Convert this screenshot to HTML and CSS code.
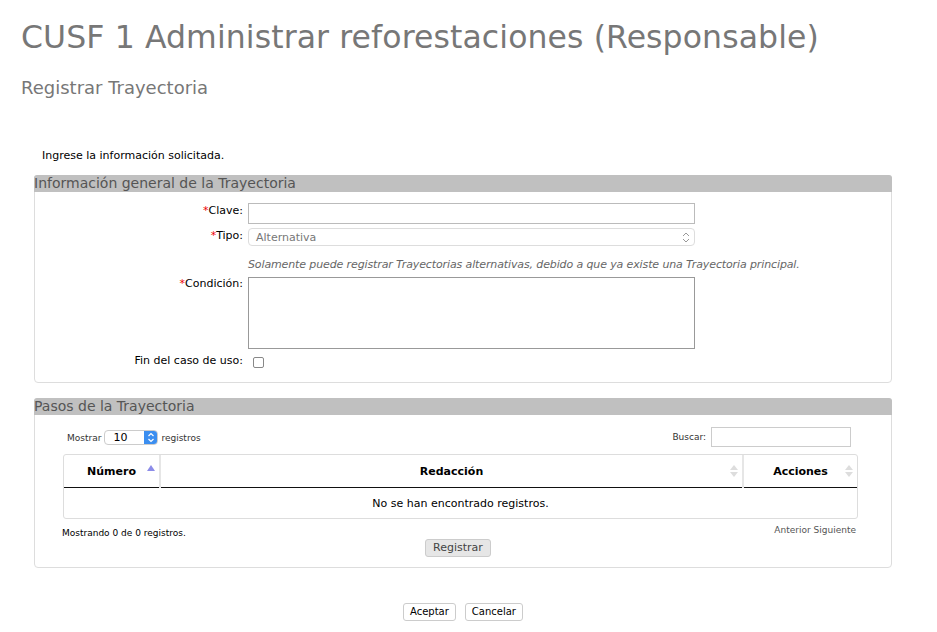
FILE: index.html
```html
<!DOCTYPE html>
<html lang="es">
<head>
<meta charset="utf-8">
<title>CUSF 1</title>
<link rel="stylesheet" href="styles.css">
</head>
<body>
<div class="page">
  <h1 class="title">CUSF 1 Administrar reforestaciones (Responsable)</h1>
  <h2 class="subtitle">Registrar Trayectoria</h2>
  <p class="intro">Ingrese la información solicitada.</p>

  <section class="panel panel-info">
    <div class="panel-head">Información general de la Trayectoria</div>
    <div class="form-grid">
      <label class="lbl lbl-clave"><span class="req">*</span>Clave:</label>
      <input class="inp" type="text">
      <label class="lbl lbl-tipo"><span class="req">*</span>Tipo:</label>
      <div class="select">
        <span>Alternativa</span>
        <svg class="updown" width="8" height="11" viewBox="0 0 8 11"><path d="M1 4 L4 1 L7 4 M1 7 L4 10 L7 7" fill="none" stroke="#999" stroke-width="1"/></svg>
      </div>
      <span></span>
      <p class="note">Solamente puede registrar Trayectorias alternativas, debido a que ya existe una Trayectoria principal.</p>
      <label class="lbl lbl-cond"><span class="req">*</span>Condición:</label>
      <div class="textarea"></div>
      <label class="lbl lbl-fin">Fin del caso de uso:</label>
      <div class="chk-wrap"><span class="chk"></span></div>
    </div>
  </section>

  <section class="panel panel-steps">
    <div class="panel-head">Pasos de la Trayectoria</div>
    <div class="dt-top">
      <div class="dt-length">Mostrar
        <span class="len-sel"><span class="len-val">10</span><span class="len-btn"><svg width="8" height="11" viewBox="0 0 8 11"><path d="M1.5 4 L4 1.5 L6.5 4 M1.5 7 L4 9.5 L6.5 7" fill="none" stroke="#fff" stroke-width="1.2"/></svg></span></span>
        registros</div>
      <div class="dt-filter">Buscar: <span class="search"></span></div>
    </div>
    <div class="table-wrap">
      <table class="dt">
        <thead>
          <tr>
            <th class="c-num">Número <span class="sort-up"></span></th>
            <th class="c-red">Redacción <span class="sort-both"><i class="u"></i><i class="d"></i></span></th>
            <th class="c-acc">Acciones <span class="sort-both"><i class="u"></i><i class="d"></i></span></th>
          </tr>
        </thead>
        <tbody>
          <tr><td colspan="3" class="empty">No se han encontrado registros.</td></tr>
        </tbody>
      </table>
    </div>
    <div class="dt-bottom">
      <span class="dt-info">Mostrando 0 de 0 registros.</span>
      <span class="dt-pag">Anterior Siguiente</span>
    </div>
    <div class="reg-row"><button class="btn btn-gray">Registrar</button></div>
  </section>

  <div class="actions">
    <button class="btn">Aceptar</button>
    <button class="btn">Cancelar</button>
  </div>
</div>
</body>
</html>
```

FILE: styles.css
```css
html, body {
  margin: 0;
  padding: 0;
  background: #fff;
}
body {
  font-family: "DejaVu Sans", Verdana, sans-serif;
  color: #000;
}
.page {
  padding: 0 45px 0 34px;
}
.title {
  font-weight: normal;
  font-size: 31.5px;
  line-height: 38px;
  color: #777;
  margin: 18px 0 0 -13px;
  letter-spacing: 0.1px;
  white-space: nowrap;
}
.subtitle {
  font-weight: normal;
  font-size: 18px;
  line-height: 22px;
  color: #777;
  margin: 21px 0 0 -13px;
}
.intro {
  font-size: 11px;
  line-height: 14px;
  margin: 50px 0 0 8px;
}
.panel {
  border: 1px solid #ddd;
  border-radius: 4px;
  background: #fff;
}
.panel-info {
  margin-top: 12px;
  height: 208px;
  box-sizing: border-box;
}
.panel-head {
  background: #c0c0c0;
  color: #555;
  font-size: 14px;
  line-height: 17px;
  height: 17px;
  margin: -1px -1px 0 -1px;
  border-radius: 3px 3px 0 0;
}
.form-grid {
  display: grid;
  grid-template-columns: 208px 447px;
  column-gap: 5px;
  margin-top: 11px;
  font-size: 11px;
}
.lbl {
  text-align: right;
  color: #000;
  line-height: 14px;
}
.req { color: #e00; }
.inp {
  box-sizing: border-box;
  height: 21px;
  width: 447px;
  border: 1px solid #bbb;
  margin: 0;
  padding: 0;
}
.lbl-clave { margin-top: 1px; }
.lbl-tipo { padding-top: 1px; margin-top: 4px; }
.select {
  margin-top: 4px;
  box-sizing: border-box;
  height: 18px;
  border: 1px solid #ddd;
  border-radius: 4px;
  display: flex;
  align-items: center;
  justify-content: space-between;
  padding: 0 4px 0 7px;
  color: #777;
  font-size: 11px;
}
.updown { display: block; }
.note {
  margin: 12px 0 0 0;
  font-style: italic;
  color: #666;
  font-size: 11px;
  line-height: 14px;
  white-space: nowrap;
  letter-spacing: -0.12px;
}
.lbl-cond { margin-top: 5px; }
.textarea {
  margin-top: 5px;
  box-sizing: border-box;
  height: 72px;
  border: 1px solid #999;
}
.lbl-fin { margin-top: 5px; }
.chk-wrap { margin-top: 8px; padding-left: 5px; }
.chk {
  display: block;
  width: 9px;
  height: 9px;
  border: 1px solid #888;
  border-radius: 2px;
}
.panel-steps {
  margin-top: 15px;
  height: 170px;
  box-sizing: border-box;
  font-size: 11px;
}
.dt-top {
  display: flex;
  justify-content: space-between;
  align-items: flex-start;
  padding: 12px 40px 0 32px;
  font-size: 9px;
  color: #333;
}
.dt-length {
  display: flex;
  align-items: center;
  gap: 3px;
  margin-top: 3px;
}
.len-sel {
  display: inline-flex;
  height: 15px;
  width: 54px;
  box-sizing: border-box;
  border: 1px solid #ccc;
  border-radius: 4px;
  overflow: hidden;
  align-items: stretch;
}
.len-val {
  flex: 1;
  font-size: 11px;
  color: #000;
  line-height: 13px;
  padding-left: 8px;
}
.len-btn {
  width: 13px;
  background: #3b8ef0;
  display: flex;
  align-items: center;
  justify-content: center;
}
.dt-filter {
  display: flex;
  align-items: center;
  gap: 5px;
}
.search {
  display: block;
  width: 140px;
  height: 20px;
  box-sizing: border-box;
  border: 1px solid #ccc;
}
.table-wrap {
  margin: 7px 33px 0 28px;
  border: 1px solid #ddd;
  border-radius: 3px;
}
.dt {
  width: 100%;
  border-collapse: collapse;
  font-size: 11px;
}
.dt th {
  height: 32px;
  font-weight: bold;
  text-align: center;
  border-bottom: 1px solid #111;
  position: relative;
  padding: 0;
}
.dt th + th { border-left: 2px solid #e6e6e6; }
.c-num { width: 95px; }
.c-acc { width: 113px; }
.sort-up {
  position: absolute;
  right: 4px;
  top: 10px;
  width: 0; height: 0;
  border-left: 4px solid transparent;
  border-right: 4px solid transparent;
  border-bottom: 6px solid #8c8ce8;
}
.sort-both {
  position: absolute;
  right: 4px;
  top: 10px;
  width: 8px;
  height: 13px;
}
.sort-both .u, .sort-both .d {
  position: absolute;
  left: 0;
  width: 0; height: 0;
  border-left: 4px solid transparent;
  border-right: 4px solid transparent;
}
.sort-both .u { top: 0; border-bottom: 5px solid #ddd; }
.sort-both .d { top: 7px; border-top: 5px solid #ddd; }
.empty {
  text-align: center;
  height: 30px;
  padding: 0;
}
.dt-bottom {
  display: flex;
  justify-content: space-between;
  align-items: flex-start;
  padding: 6px 35px 0 27px;
  font-size: 9px;
  color: #333;
}
.dt-info { margin-top: 3px; color: #000; }
.dt-pag { color: #555; }
.reg-row {
  display: flex;
  justify-content: center;
  margin-top: 1px;
  padding-right: 10px;
}
.btn {
  font-family: "DejaVu Sans", Verdana, sans-serif;
  font-size: 10px;
  line-height: 14px;
  height: 18px;
  padding: 0 6px;
  border: 1px solid #ccc;
  border-radius: 3px;
  background: #fff;
  color: #000;
}
.btn-gray {
  font-size: 11px;
  background: #e6e6e6;
  color: #444;
  padding: 0 7px;
}
.actions {
  display: flex;
  justify-content: center;
  gap: 9px;
  margin-top: 35px;
}
```
